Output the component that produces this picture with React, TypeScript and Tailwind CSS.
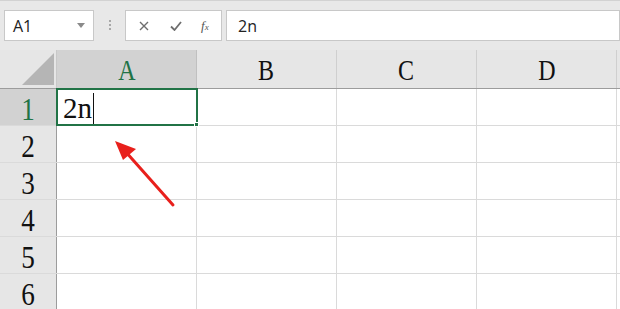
import React from "react";

const columns = ["A", "B", "C", "D", ""];
const rows = [1, 2, 3, 4, 5, 6];

export default function App() {
  return (
    <div className="relative h-[309px] w-[620px] overflow-hidden bg-white font-['Liberation_Serif',serif]">
      {/* formula bar */}
      <div className="flex h-[50px] items-start gap-1 border-t border-[#d2d2d2] bg-[#e8e8e8] pl-1 pt-[9px]">
        <div className="flex h-[31px] w-[90px] items-center justify-between border border-[#c8c8c8] bg-white pl-2 pr-2 font-['Open_Sans',sans-serif] text-[16px] text-[#222]">
          <span>A1</span>
          <svg width="8" height="5" viewBox="0 0 8 5">
            <path d="M0 0h8L4 5z" fill="#8a8a8a" />
          </svg>
        </div>
        <div className="flex w-[23px] flex-col items-center justify-center gap-[2px] pt-[10px]">
          <span className="h-[2px] w-[2px] bg-[#a8a8a8]" />
          <span className="h-[2px] w-[2px] bg-[#a8a8a8]" />
          <span className="h-[2px] w-[2px] bg-[#a8a8a8]" />
        </div>
        <div className="flex h-[31px] w-[97px] items-center border border-[#c8c8c8] bg-white">
          <svg className="ml-[13px]" width="10" height="10" viewBox="0 0 10 10">
            <path d="M1 1l8 8M9 1l-8 8" stroke="#6e6e6e" strokeWidth="1.4" />
          </svg>
          <svg className="ml-[21px]" width="12" height="10" viewBox="0 0 12 10">
            <path d="M1 5.5l3.5 3.5L11 1" stroke="#6e6e6e" strokeWidth="1.8" fill="none" />
          </svg>
          <span className="ml-[19px] font-['Liberation_Serif',serif] text-[13px] italic text-[#555]">
            f<span className="text-[9px]">x</span>
          </span>
        </div>
        <div className="flex h-[31px] flex-1 items-center border border-[#c8c8c8] bg-white pl-[11px] font-['Open_Sans',sans-serif] text-[16px] text-[#222]">
          2n
        </div>
      </div>

      {/* grid header */}
      <div className="flex h-[39px] border-b border-[#9c9c9c] bg-[#e6e6e6]">
        <div className="relative w-[57px] shrink-0 border-r border-[#c8c8c8]">
          <svg className="absolute left-[22px] top-[3px]" width="32" height="32" viewBox="0 0 32 32">
            <path d="M32 0V32H0z" fill="#b5b5b5" />
          </svg>
        </div>
        {columns.map((c, i) => (
          <div
            key={i}
            className={`flex w-[140px] shrink-0 items-center justify-center border-r pt-[2px] text-[30px] leading-none ${
              i === 0
                ? "border-[#c0c0c0] bg-[#d2d2d2] text-[#217346]"
                : "border-[#cfcfcf] text-[#111]"
            }`}
          >
            <span className="inline-block scale-x-[0.8]">{c}</span>
          </div>
        ))}
      </div>

      {/* rows */}
      {rows.map((r) => (
        <div key={r} className="flex h-[37px] border-b border-[#dadada]">
          <div
            className={`flex w-[57px] shrink-0 items-center justify-center border-r border-[#9c9c9c] pt-[3px] text-[32px] leading-none ${
              r === 1 ? "bg-[#d2d2d2] text-[#217346]" : "bg-[#e6e6e6] text-[#111]"
            }`}
          >
            <span className="inline-block scale-x-[0.85]">{r}</span>
          </div>
          {columns.map((c, i) => (
            <div key={i} className="relative w-[140px] shrink-0 border-r border-[#dadada]">
              {r === 1 && c === "A" && (
                <div className="absolute -left-px -top-px z-10 flex h-[38px] w-[142px] items-center border-2 border-[#217346] bg-white pl-[5px] pt-[2px] text-[29px] leading-none text-[#111]">
                  <span>2n</span>
                  <span className="ml-[1px] h-[31px] w-px bg-[#111]" />
                  <span className="absolute -bottom-[3px] -right-[3px] h-[5px] w-[5px] border border-white bg-[#217346]" />
                </div>
              )}
            </div>
          ))}
        </div>
      ))}

      {/* annotation arrow */}
      <svg className="pointer-events-none absolute left-0 top-0" width="620" height="309">
        <line x1="173" y1="205" x2="125" y2="151" stroke="#e8201c" strokeWidth="3" strokeLinecap="round" />
        <path d="M115 141L136 149L123 160z" fill="#e8201c" />
      </svg>
    </div>
  );
}
